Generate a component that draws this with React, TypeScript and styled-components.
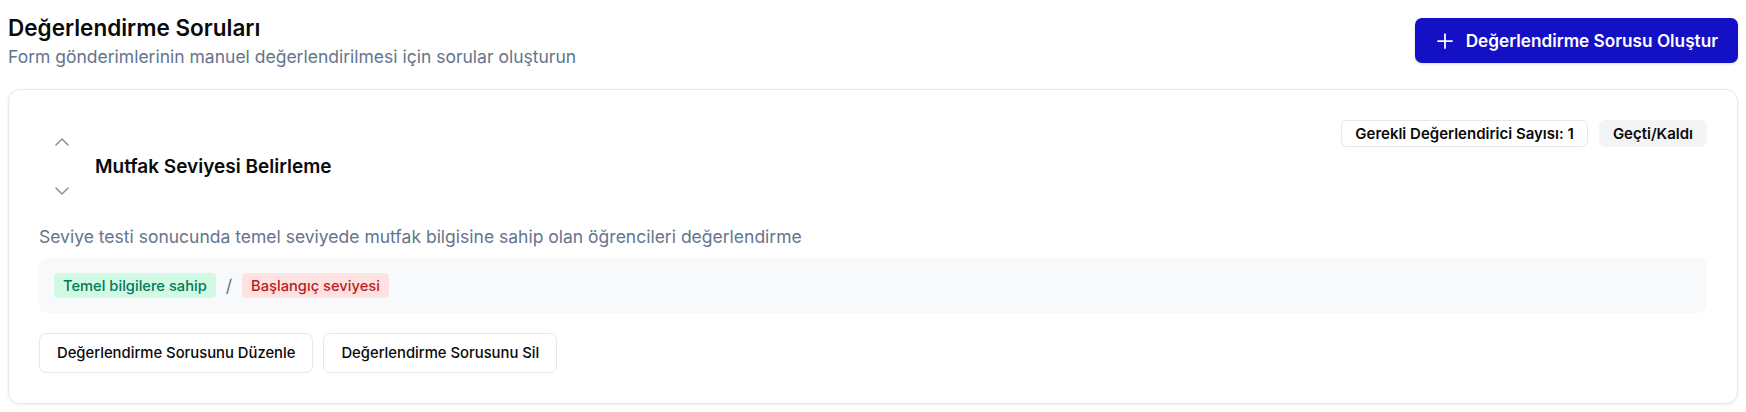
import styled, { createGlobalStyle } from "styled-components";
import { ChevronDown, ChevronUp, Plus } from "lucide-react";

const GlobalStyle = createGlobalStyle`
  body {
    margin: 0;
    background: #ffffff;
    font-family: Inter, "Noto Sans", sans-serif;
    color: #0a0a0a;
  }
`;

const Page = styled.div`
  padding: 13px 8px 8px;
`;

const Header = styled.div`
  display: flex;
  justify-content: space-between;
  align-items: flex-start;
`;

const Title = styled.h1`
  margin: 0;
  font-size: 22.5px;
  line-height: 30px;
  font-weight: 600;
`;

const Subtitle = styled.p`
  margin: 1px 0 0;
  font-size: 17.5px;
  line-height: 26px;
  color: #64748b;
`;

const PrimaryButton = styled.button`
  display: flex;
  align-items: center;
  gap: 9px;
  height: 45px;
  margin-top: 5px;
  padding: 0 20px 0 18px;
  border: none;
  border-radius: 7px;
  background: #1410c6;
  color: #ffffff;
  font-family: inherit;
  font-size: 17.2px;
  font-weight: 600;
  box-shadow: 0 1px 3px rgba(0, 0, 0, 0.15);
  cursor: pointer;
`;

const Card = styled.section`
  margin-top: 19px;
  padding: 30px;
  border: 1px solid #e4e7ec;
  border-radius: 12px;
  box-shadow: 0 1px 3px rgba(15, 23, 42, 0.08);
`;

const CardHead = styled.div`
  display: flex;
  justify-content: space-between;
  align-items: flex-start;
`;

const TitleGroup = styled.div`
  display: flex;
  align-items: center;
  gap: 21px;
  margin-top: 10px;
  padding-left: 11px;
`;

const Arrows = styled.div`
  display: flex;
  flex-direction: column;
  gap: 25px;
`;

const ArrowButton = styled.button`
  display: flex;
  padding: 0;
  border: none;
  background: none;
  color: #8a8f98;
  cursor: pointer;
`;

const QuestionTitle = styled.h2`
  margin: 0;
  font-size: 19px;
  line-height: 28px;
  font-weight: 600;
`;

const Badges = styled.div`
  display: flex;
  gap: 11px;
`;

const Badge = styled.span<{ $muted?: boolean }>`
  display: inline-flex;
  align-items: center;
  height: 27px;
  box-sizing: border-box;
  padding: 0 13px;
  border-radius: 6px;
  border: 1px solid ${({ $muted }) => ($muted ? "#f3f4f6" : "#e2e8f0")};
  background: ${({ $muted }) => ($muted ? "#f3f4f6" : "#ffffff")};
  font-size: 15px;
  font-weight: 600;
`;

const Description = styled.p`
  margin: 21px 0 0;
  font-size: 17.5px;
  line-height: 26px;
  color: #64748b;
`;

const OutcomeBox = styled.div`
  display: flex;
  align-items: center;
  gap: 10px;
  height: 55px;
  box-sizing: border-box;
  margin-top: 8px;
  padding: 0 15px;
  border-radius: 8px;
  background: #f8f9fb;
`;

const Outcome = styled.span<{ $tone: "pass" | "fail" }>`
  display: inline-flex;
  align-items: center;
  height: 25px;
  padding: 0 9px;
  border-radius: 4px;
  font-size: 14.7px;
  font-weight: 500;
  background: ${({ $tone }) => ($tone === "pass" ? "#d1fae5" : "#fee2e2")};
  color: ${({ $tone }) => ($tone === "pass" ? "#047857" : "#b91c1c")};
`;

const Slash = styled.span`
  color: #6b7280;
  font-size: 17.5px;
`;

const Actions = styled.div`
  display: flex;
  gap: 10px;
  margin-top: 20px;
`;

const OutlineButton = styled.button`
  height: 40px;
  padding: 0 17px;
  border: 1px solid #e2e8f0;
  border-radius: 7px;
  background: #ffffff;
  color: #0a0a0a;
  font-family: inherit;
  font-size: 14.8px;
  font-weight: 500;
  cursor: pointer;
`;

export default function App() {
  return (
    <Page>
      <GlobalStyle />
      <Header>
        <div>
          <Title>Değerlendirme Soruları</Title>
          <Subtitle>Form gönderimlerinin manuel değerlendirilmesi için sorular oluşturun</Subtitle>
        </div>
        <PrimaryButton>
          <Plus size={24} strokeWidth={1.75} />
          Değerlendirme Sorusu Oluştur
        </PrimaryButton>
      </Header>

      <Card>
        <CardHead>
          <TitleGroup>
            <Arrows>
              <ArrowButton aria-label="Yukarı taşı">
                <ChevronUp size={24} strokeWidth={1.5} />
              </ArrowButton>
              <ArrowButton aria-label="Aşağı taşı">
                <ChevronDown size={24} strokeWidth={1.5} />
              </ArrowButton>
            </Arrows>
            <QuestionTitle>Mutfak Seviyesi Belirleme</QuestionTitle>
          </TitleGroup>
          <Badges>
            <Badge>Gerekli Değerlendirici Sayısı: 1</Badge>
            <Badge $muted>Geçti/Kaldı</Badge>
          </Badges>
        </CardHead>

        <Description>
          Seviye testi sonucunda temel seviyede mutfak bilgisine sahip olan öğrencileri değerlendirme
        </Description>

        <OutcomeBox>
          <Outcome $tone="pass">Temel bilgilere sahip</Outcome>
          <Slash>/</Slash>
          <Outcome $tone="fail">Başlangıç seviyesi</Outcome>
        </OutcomeBox>

        <Actions>
          <OutlineButton>Değerlendirme Sorusunu Düzenle</OutlineButton>
          <OutlineButton>Değerlendirme Sorusunu Sil</OutlineButton>
        </Actions>
      </Card>
    </Page>
  );
}
